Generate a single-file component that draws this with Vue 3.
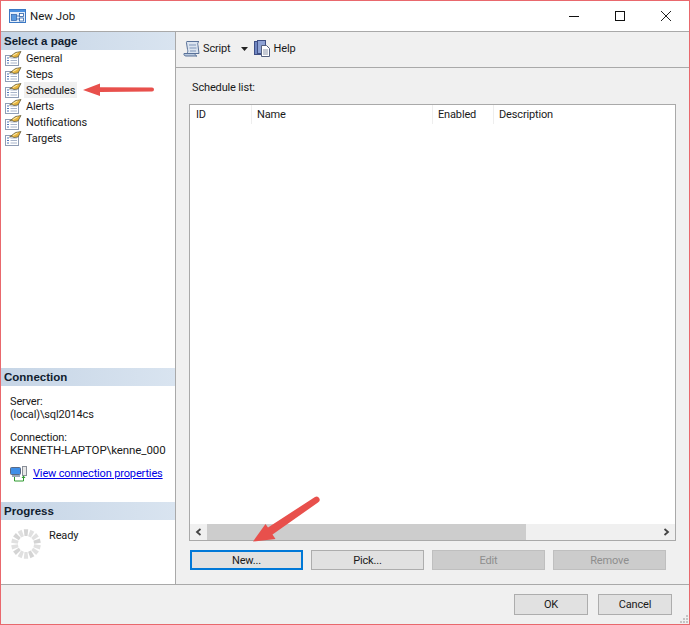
<script setup>
const pages = ['General', 'Steps', 'Schedules', 'Alerts', 'Notifications', 'Targets']
const spokes = Array.from({ length: 14 }, (_, i) => ({ a: i * (360 / 14), c: i % 3 === 0 ? '#d4d4d4' : '#e0e0e0' }))
</script>

<template>
  <div class="window">
    <header class="titlebar">
      <svg class="app-icon" width="17" height="16" viewBox="0 0 17 16">
        <rect x="0.500" y="1.500" width="16" height="13" fill="#e4eefa" stroke="#3b78c4" />
        <rect x="1" y="2" width="15" height="2" fill="#4a90e0" />
        <rect x="2.500" y="6.500" width="5" height="6" fill="#5b9be0" stroke="#2a5fa8" stroke-width="0.700" />
        <rect x="10.500" y="5.500" width="4" height="3" fill="#fff" stroke="#2a5fa8" stroke-width="0.800" />
        <rect x="10.500" y="10" width="4" height="3" fill="#fff" stroke="#2a5fa8" stroke-width="0.800" />
        <path d="M7.500 8h3M7.500 11h3" stroke="#2a5fa8" stroke-width="0.800" />
      </svg>
      <span class="title">New Job</span>
      <div class="controls">
        <svg width="12" height="12" viewBox="0 0 12 12"><path d="M1 6.500h10" stroke="#111" /></svg>
        <svg width="12" height="12" viewBox="0 0 12 12"><rect x="1.500" y="1.500" width="9" height="9" fill="none" stroke="#111" /></svg>
        <svg width="12" height="12" viewBox="0 0 12 12"><path d="M1 1l10 10M11 1L1 11" stroke="#222" /></svg>
      </div>
    </header>

    <div class="body">
      <aside class="sidebar">
        <h2 class="band">Select a page</h2>
        <ul class="pages">
          <li v-for="p in pages" :key="p" class="page">
            <svg width="17" height="15" viewBox="0 0 17 15">
              <rect x="0.500" y="4.500" width="13" height="10" fill="#fff" stroke="#8f9db5" />
              <path d="M2 7h2M2 9.500h2M2 12h2" stroke="#4f76b8" />
              <path d="M5.500 7h6.500M5.500 9.500h6.500M5.500 12h6.500" stroke="#a8b4ca" />
              <path d="M4.500 6L10.500 1.500l5.500-1-3 5.500-4 .5-2-1z" fill="#e8b53e" stroke="#57533a" stroke-width="0.700" />
              <path d="M8 4.500l4.500-2.500" stroke="#fdeeb0" />
            </svg>
            <span class="page-label" :class="{ active: p === 'Schedules' }">{{ p }}</span>
          </li>
        </ul>

        <h2 class="band connection-band">Connection</h2>
        <div class="conn">
          <p>Server:<br />(local)\sql2014cs</p>
          <p>Connection:<br /><span class="login">KENNETH-LAPTOP\kenne_000</span></p>
          <div class="conn-link">
            <svg width="17" height="16" viewBox="0 0 17 16">
              <rect x="0.500" y="1.500" width="10" height="7" rx="1" fill="#3f8fe8" stroke="#5a6a85" />
              <rect x="2" y="9" width="8" height="2" fill="#9aa7b8" />
              <rect x="12.500" y="0.500" width="4" height="9" fill="#e8e8e8" stroke="#8a8f98" />
              <path d="M4.500 11v4h9v-4" fill="none" stroke="#2f9b2f" />
              <path d="M11.500 12l2-2.500 2 2.500z" fill="#2f9b2f" />
            </svg>
            <a href="#">View connection properties</a>
          </div>
        </div>

        <h2 class="band progress-band">Progress</h2>
        <div class="progress">
          <svg width="30" height="30" viewBox="0 0 30 30">
            <path v-for="s in spokes" :key="s.a" d="M12.800 0.300h4.400l-.7 6.700h-3z" :fill="s.c" :transform="`rotate(${s.a} 15 15)`" />
          </svg>
          <span>Ready</span>
        </div>
      </aside>

      <main class="main">
        <div class="toolbar">
          <svg width="17" height="17" viewBox="0 0 17 17">
            <path d="M4 1.500h12c-1.500 1-1.500 2.500-1 4l1 8H3.500c1.500-.8 1.500-2.500 1-4L3.500 3c-.2-1 0-1.500.5-1.500z" fill="#dbe4f0" stroke="#5a7299" />
            <path d="M1 13.500h11c0 1.500 1 2.500 2 2.500H3c-1.500 0-2.500-1.200-2-2.500z" fill="#b8c8de" stroke="#5a7299" />
            <path d="M6 5h7M6.500 8h7M7 11h6" stroke="#7f95b8" />
          </svg>
          <span class="tool-label">Script</span>
          <svg class="caret" width="7" height="4" viewBox="0 0 7 4"><path d="M0 0h7L3.500 4z" fill="#222" /></svg>
          <svg class="help-icon" width="17" height="17" viewBox="0 0 17 17">
            <rect x="0.500" y="1.500" width="8" height="13" fill="#6f86c2" stroke="#3f4f85" />
            <rect x="3.500" y="0.500" width="8" height="13" fill="#8ea2d4" stroke="#3f4f85" />
            <path d="M7.500 5.500h5l3 3v8h-8z" fill="#fff" stroke="#54607e" />
            <path d="M9 10h5M9 12h5M9 14h5" stroke="#8b94a8" />
          </svg>
          <span class="tool-label">Help</span>
        </div>

        <section class="content">
          <label class="list-label">Schedule list:</label>
          <div class="listbox">
            <div class="head">
              <span class="col col-id">ID</span>
              <span class="col col-name">Name</span>
              <span class="col col-enabled">Enabled</span>
              <span class="col col-desc">Description</span>
            </div>
            <div class="rows"></div>
            <div class="hscroll">
              <span class="arrow">
                <svg width="7" height="8" viewBox="0 0 7 8"><path d="M5.500 1L2 4l3.500 3" fill="none" stroke="#444" stroke-width="1.800" /></svg>
              </span>
              <div class="track"><div class="thumb"></div></div>
              <span class="arrow">
                <svg width="7" height="8" viewBox="0 0 7 8"><path d="M1.500 1L5 4 1.500 7" fill="none" stroke="#444" stroke-width="1.800" /></svg>
              </span>
            </div>
          </div>
          <div class="actions">
            <button class="btn focus">New...</button>
            <button class="btn">Pick...</button>
            <button class="btn off">Edit</button>
            <button class="btn off">Remove</button>
          </div>
        </section>
      </main>
    </div>

    <footer class="footer">
      <button class="btn dlg">OK</button>
      <button class="btn dlg">Cancel</button>
      <svg class="grip" width="10" height="10" viewBox="0 0 10 10">
        <path d="M7 1h2v2H7zM4 4h2v2H4zM7 4h2v2H7zM1 7h2v2H1zM4 7h2v2H4zM7 7h2v2H7z" fill="#c4c4c4" />
      </svg>
    </footer>

    <svg class="annotations" width="690" height="625" viewBox="0 0 690 625">
      <g fill="#e8504c">
        <path d="M152 87.500L100 87.300V83.500L83 90 100 96V92L152 91.500a2 2 0 0 0 0-4z" />
        <path d="M315 497L268 527.500 265.500 524 253 541.500 275.500 539 272.500 534.500 318 502.500a3 3 0 0 0-3-5.500z" />
      </g>
    </svg>
  </div>
</template>

<style>
html, body { margin: 0; padding: 0; background: #fff; }
</style>

<style scoped>
.window {
  position: relative;
  box-sizing: border-box;
  width: 690px;
  height: 625px;
  border: 1px solid #e9686d;
  display: flex;
  flex-direction: column;
  background: #f0f0f0;
  font-family: Roboto, "Liberation Sans", Arial, sans-serif;
  font-size: 11px;
  letter-spacing: -0.15px;
  color: #1a1a1a;
  overflow: hidden;
}
.titlebar {
  height: 30px;
  background: #fff;
  display: flex;
  align-items: center;
  flex: none;
  padding-left: 8px;
}
.title { margin-left: 4px; font-size: 11.5px; letter-spacing: 0; }
.controls {
  margin-left: auto;
  display: flex;
  gap: 34px;
  padding-right: 17px;
  align-items: center;
}
.body {
  flex: none;
  height: 554px;
  display: flex;
  border-top: 1px solid #a9a9a9;
  border-bottom: 1px solid #a9a9a9;
  box-sizing: border-box;
}
.sidebar {
  width: 175px;
  flex: none;
  box-sizing: border-box;
  background: #fff;
  border-right: 1px solid #a9a9a9;
  display: flex;
  flex-direction: column;
}
.band {
  margin: 0;
  height: 18px;
  line-height: 18px;
  padding-left: 3px;
  font-family: "Liberation Sans", Arial, sans-serif;
  font-size: 11.5px;
  font-weight: 700;
  letter-spacing: 0;
  color: #10202f;
  background: linear-gradient(90deg, #c6d5e6, #d9e4f0);
  flex: none;
}
.pages { list-style: none; margin: 0; padding: 0; }
.page {
  height: 16px;
  display: flex;
  align-items: center;
  padding-left: 4px;
}
.page-label { margin-left: 2px; padding: 1px 2px 0; line-height: 15px; }
.page-label.active { background: #f0f0f0; }
.connection-band { margin-top: 222px; }
.conn { padding: 9px 0 0 9px; line-height: 13px; white-space: nowrap; }
.conn p { margin: 0 0 10px; }
.login { font-size: 11.5px; letter-spacing: -0.1px; }
.conn-link { display: flex; align-items: center; gap: 6px; margin-top: -1px; }
.conn-link a { color: #0000e6; text-decoration: underline; line-height: 13px; margin-top: -1px; }
.progress-band { margin-top: 20px; }
.progress { display: flex; padding: 9px 0 0 10px; gap: 8px; }
.progress span { line-height: 14px; }
.main { flex: 1; min-width: 0; display: flex; flex-direction: column; }
.toolbar {
  height: 36px;
  flex: none;
  box-sizing: border-box;
  border-bottom: 1px solid #a9a9a9;
  display: flex;
  align-items: center;
  padding: 0 0 2px 7px;
  background: #f0f0f0;
}
.tool-label { margin-left: 3px; }
.caret { margin-left: 10px; }
.help-icon { margin-left: 6px; }
.content {
  flex: 1;
  box-sizing: border-box;
  padding: 13px 13px 13px 13px;
  display: flex;
  flex-direction: column;
}
.list-label { line-height: 14px; margin-left: 3px; height: 23px; flex: none; }
.listbox {
  height: 437px;
  box-sizing: border-box;
  border: 1px solid #a9a9a9;
  background: #fff;
  display: flex;
  flex-direction: column;
  flex: none;
}
.head { display: flex; height: 19px; flex: none; }
.col { padding-left: 5px; line-height: 19px; border-right: 1px solid #eeeeee; box-sizing: border-box; }
.col-id { width: 62px; padding-left: 6px; }
.col-name { width: 181px; }
.col-enabled { width: 61px; }
.col-desc { flex: 1; border-right: 0; }
.rows { flex: 1; }
.hscroll { height: 16px; display: flex; flex: none; background: #f0f0f0; }
.arrow { width: 17px; display: flex; align-items: center; justify-content: center; flex: none; }
.track { flex: 1; }
.thumb { width: 319px; height: 100%; background: #cdcdcd; }
.actions { display: flex; gap: 8px; margin: 9px 0 0 1px; }
.btn {
  width: 113px;
  height: 20px;
  box-sizing: border-box;
  border: 1px solid #adadad;
  background: #e1e1e1;
  font: inherit;
  letter-spacing: inherit;
  color: #1a1a1a;
  padding: 0;
}
.btn.focus { border: 2px solid #0078d7; }
.btn.off { background: #cccccc; border-color: #bfbfbf; color: #8e8e8e; }
.footer {
  flex: 1;
  position: relative;
  display: flex;
  justify-content: flex-end;
  align-items: flex-start;
  gap: 10px;
  padding: 9px 17px 0 0;
}
.btn.dlg { width: 74px; height: 21px; }
.grip { position: absolute; right: 0; bottom: 0; }
.annotations { position: absolute; left: -1px; top: -1px; pointer-events: none; }
</style>
